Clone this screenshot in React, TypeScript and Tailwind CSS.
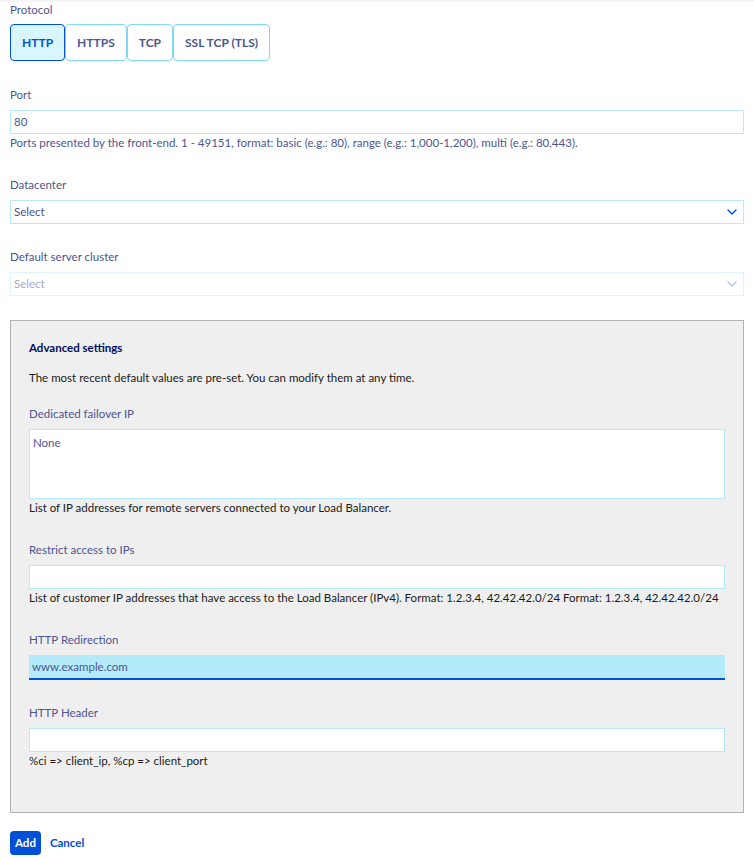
import React, { useState } from 'react';
import { ChevronDown } from 'lucide-react';

const protocols = ['HTTP', 'HTTPS', 'TCP', 'SSL TCP (TLS)'];

const Label: React.FC<{ children: React.ReactNode }> = ({ children }) => (
  <div className="text-[11.5px] leading-[16px] text-[#4d5592] mb-[7px]">{children}</div>
);

const Help: React.FC<{ children: React.ReactNode; dark?: boolean }> = ({ children, dark }) => (
  <div
    className={`text-[11.5px] leading-[16px] mt-[1px] whitespace-nowrap ${
      dark ? 'text-[#1a1a1a]' : 'text-[#4d5592]'
    }`}
  >
    {children}
  </div>
);

const Select: React.FC<{ disabled?: boolean }> = ({ disabled }) => (
  <div
    className={`h-[24px] flex items-center justify-between pl-[3px] pr-[3px] border bg-white ${
      disabled ? 'border-[#dcf5fc] text-[#a5abcf]' : 'border-[#b7ebfb] text-[#4d5592]'
    }`}
  >
    <span className="text-[11.5px] leading-[16px]">Select</span>
    <ChevronDown
      className={`w-[16px] h-[16px] ${disabled ? 'text-[#a5c0ee]' : 'text-[#0050d7]'}`}
      strokeWidth={2}
    />
  </div>
);

export default function App() {
  const [proto, setProto] = useState('HTTP');

  return (
    <div className="min-h-screen bg-white font-['Lato',sans-serif] border-t-[2px] border-[#f4f5f8]">
      <div className="px-[10px]">
        <Label>Protocol</Label>
        <div className="flex -mt-[1px]">
          {protocols.map((p) => (
            <button
              key={p}
              onClick={() => setProto(p)}
              className={`h-[37px] px-[11px] rounded-[4px] border text-[12px] leading-[16px] font-bold ${
                proto === p
                  ? 'bg-[#d9f6fd] border-[#0050d7] text-[#0050d7]'
                  : 'bg-white border-[#7fd8f5] text-[#4d5592]'
              }`}
            >
              {p}
            </button>
          ))}
        </div>

        <div className="mt-[26px]">
          <Label>Port</Label>
          <div className="h-[24px] border border-[#b7ebfb] flex items-center px-[3px] text-[11.5px] leading-[16px] text-[#4d5592]">
            80
          </div>
          <Help>
            Ports presented by the front-end. 1 - 49151, format: basic (e.g.: 80), range (e.g.: 1,000-1,200), multi (e.g.: 80,443).
          </Help>
        </div>

        <div className="mt-[26px]">
          <Label>Datacenter</Label>
          <Select />
        </div>

        <div className="mt-[25px]">
          <Label>Default server cluster</Label>
          <Select disabled />
        </div>

        <div className="mt-[24px] bg-[#efefef] border border-[#b3b3b3] px-[18px] pt-[19px] pb-[43px]">
          <div className="text-[11.5px] leading-[16px] font-bold text-[#000e5c]">Advanced settings</div>
          <div className="text-[11.5px] leading-[16px] text-[#1a1a1a] mt-[14px]">
            The most recent default values are pre-set. You can modify them at any time.
          </div>

          <div className="mt-[20px]">
            <Label>Dedicated failover IP</Label>
            <div className="h-[70px] bg-white border border-[#b7ebfb] px-[3px] pt-[5px] text-[11.5px] leading-[16px] text-[#4d5592]">
              None
            </div>
            <Help dark>List of IP addresses for remote servers connected to your Load Balancer.</Help>
          </div>

          <div className="mt-[26px]">
            <Label>Restrict access to IPs</Label>
            <div className="h-[24px] bg-white border border-[#b7ebfb]" />
            <Help dark>
              List of customer IP addresses that have access to the Load Balancer (IPv4). Format: 1.2.3.4, 42.42.42.0/24 Format: 1.2.3.4, 42.42.42.0/24
            </Help>
          </div>

          <div className="mt-[26px]">
            <Label>HTTP Redirection</Label>
            <div className="h-[25px] bg-[#b3ebfb] border-b-[2px] border-[#0050d7] flex items-center px-[3px] text-[11.5px] leading-[16px] text-[#4d5592]">
              www.example.com
            </div>
          </div>

          <div className="mt-[25px]">
            <Label>HTTP Header</Label>
            <div className="h-[24px] bg-white border border-[#b7ebfb]" />
            <Help dark>%ci =&gt; client_ip, %cp =&gt; client_port</Help>
          </div>
        </div>

        <div className="flex items-center gap-[9px] mt-[18px]">
          <button className="h-[24px] px-[5px] rounded-[4px] bg-[#0050d7] text-white text-[11.5px] leading-[16px] font-bold">
            Add
          </button>
          <button className="text-[11.5px] leading-[16px] font-bold text-[#0050d7]">Cancel</button>
        </div>
      </div>
    </div>
  );
}
